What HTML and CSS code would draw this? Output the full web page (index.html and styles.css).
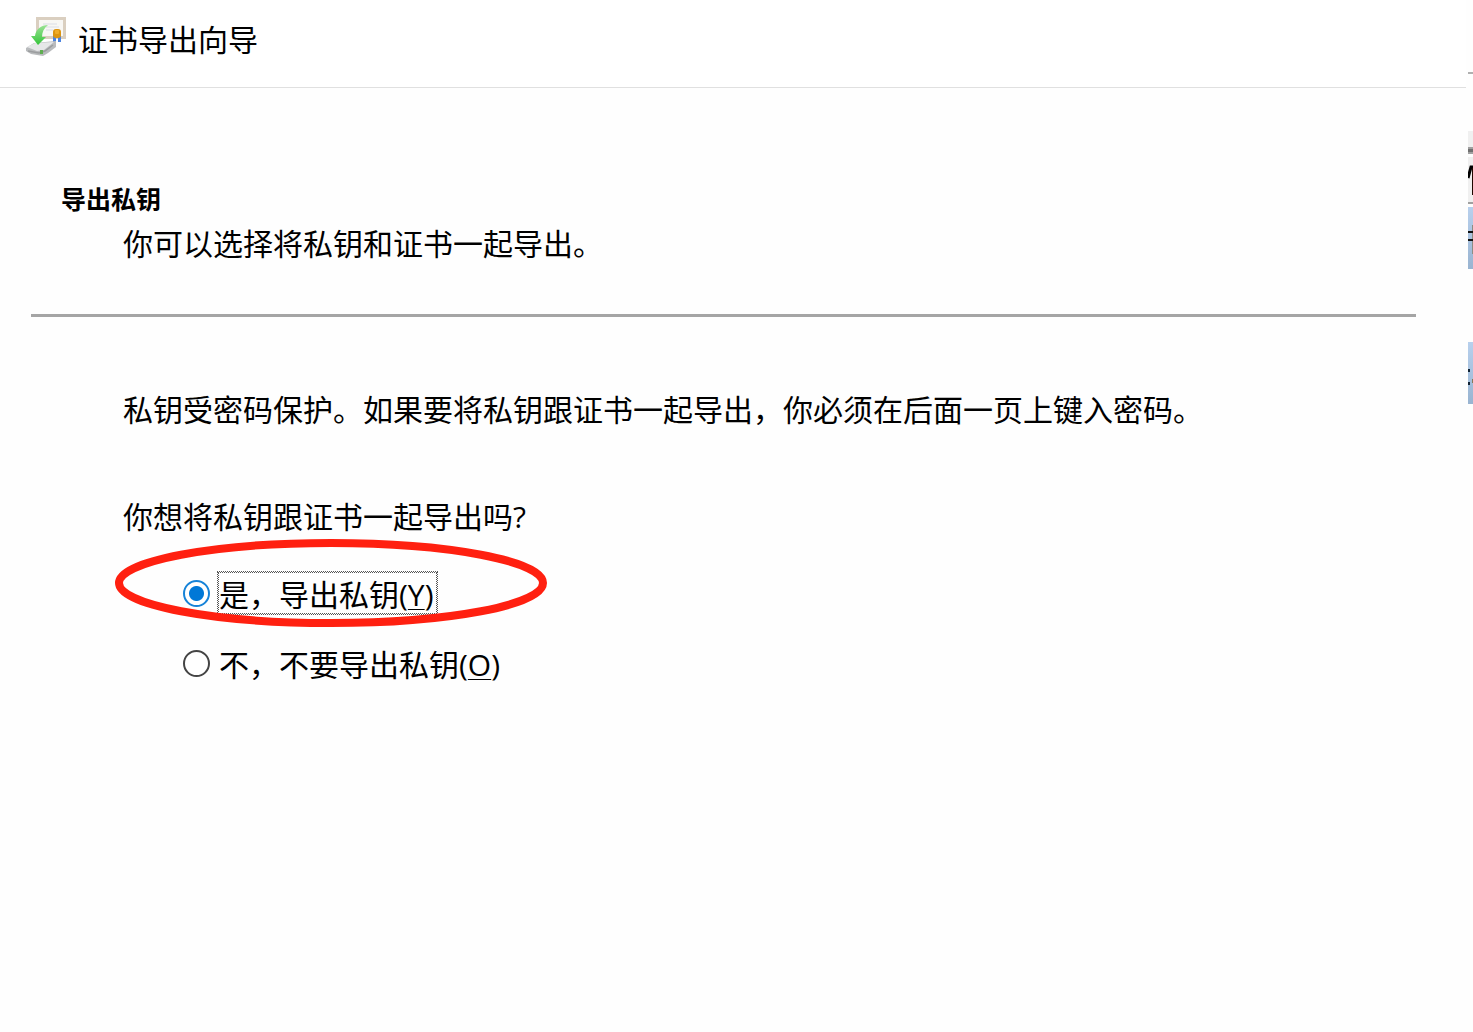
FILE: index.html
```html
<!DOCTYPE html>
<html lang="zh-CN">

<head>
    <meta charset="UTF-8">
    <meta name="viewport" content="width=device-width, initial-scale=1.0">
    <title>证书导出向导</title>
    <link rel="stylesheet" href="styles.css">
</head>

<body>
    <main class="wizard">
        <header class="wizard-header">
            <svg class="wizard-icon" width="40" height="40" viewBox="0 0 40 40" aria-hidden="true">
                <defs>
                    <linearGradient id="arrow" x1="0" y1="0" x2="0" y2="1">
                        <stop offset="0" stop-color="#9be295" />
                        <stop offset="1" stop-color="#35c53a" />
                    </linearGradient>
                </defs>
                <!-- certificate -->
                <rect x="10" y="0" width="30" height="22" fill="#dacfc0" />
                <rect x="13" y="3" width="24" height="16" fill="#f8f7f4" />
                <path d="M17 7h14M20 10h13M20 13h7" stroke="#e3e6ea" stroke-width="1.5" />
                <path d="M27 18h3v7h-3zM32 18h3v7h-3z" fill="#4a83e0" />
                <rect x="27" y="12" width="8" height="9" rx="3" fill="#dd9510" />
                <rect x="29" y="13" width="4" height="4" rx="1" fill="#efac28" />
                <!-- drive -->
                <path d="M0 31l8-5 22-2v6l-8 6-5 3-12-2-5-3z" fill="#b9bbbd" />
                <path d="M1 30l8-4 19-1-10 8-7 1z" fill="#e6e7e8" />
                <path d="M2 34l11 2 6-2 8-6" fill="none" stroke="#9b9d9f" stroke-width="1.5" />
                <rect x="14" y="33" width="3" height="4" fill="#5fae51" />
                <!-- arrow -->
                <path d="M22 8c-7 0-12 4-13 11H5l7 9 8-8h-4c0-5 2-9 6-12z" fill="url(#arrow)" />
            </svg>
            <h1 class="wizard-title">证书导出向导</h1>
        </header>

        <section class="intro">
            <h2 class="intro-title">导出私钥</h2>
            <p class="intro-text">你可以选择将私钥和证书一起导出。</p>
        </section>

        <hr class="divider">

        <form class="content">
            <p class="note">私钥受密码保护。如果要将私钥跟证书一起导出，你必须在后面一页上键入密码。</p>
            <fieldset class="options">
                <legend class="question">你想将私钥跟证书一起导出吗?</legend>
                <div class="option">
                    <input type="radio" id="exportYes" name="exportKey" value="yes" checked>
                    <label class="focused" for="exportYes">是，导出私钥(<u>Y</u>)</label>
                </div>
                <div class="option">
                    <input type="radio" id="exportNo" name="exportKey" value="no">
                    <label for="exportNo">不，不要导出私钥(<u>O</u>)</label>
                </div>
                <svg class="highlight" width="434" height="90" viewBox="0 0 434 90" aria-hidden="true">
                    <ellipse cx="217" cy="45" rx="212" ry="40" fill="none" stroke="#ff2010" stroke-width="8" />
                </svg>
            </fieldset>
        </form>
    </main>

    <!-- edge of the window behind the wizard -->
    <aside class="behind" aria-hidden="true">
        <svg width="5" height="420" viewBox="0 0 5 420">
            <defs>
                <linearGradient id="selected" x1="0" y1="0" x2="0" y2="1">
                    <stop offset="0" stop-color="#b8d0ed" />
                    <stop offset="1" stop-color="#99b4d1" />
                </linearGradient>
            </defs>
            <rect y="72" width="5" height="2" fill="#b0b0b0" />
            <rect y="131" width="5" height="17" fill="#f0f0f0" />
            <rect y="147" width="5" height="7" fill="#a0a0a0" />
            <rect y="149" width="5" height="3" fill="#707070" />
            <rect y="157" width="5" height="45" fill="#f0f0f0" />
            <path d="M0 178L3 167H5" fill="none" stroke="#000" stroke-width="3" />
            <rect x="4" y="168" width="1" height="27" fill="#200800" />
            <rect y="202" width="5" height="2" fill="#a0a0a0" />
            <rect y="207" width="5" height="62" fill="url(#selected)" />
            <rect x="4" y="225" width="1" height="29" fill="#8c8d84" />
            <rect y="231" width="5" height="2" fill="#111" />
            <rect y="239" width="5" height="2" fill="#111" />
            <rect y="342" width="5" height="62" fill="url(#selected)" />
            <rect y="369" width="2" height="3" fill="#123" />
            <rect y="382" width="2" height="3" fill="#123" />
            <rect x="4" y="379" width="1" height="4" fill="#86795a" />
        </svg>
    </aside>
</body>

</html>
```

FILE: styles.css
```css
body {
    font-family: "Open Sans", "Noto Sans CJK SC", sans-serif;
    font-size: 30px;
    line-height: 40px;
    background-color: #fefefe;
    color: #000;
    margin: 0;
    display: flex;
    min-height: 100vh;
}

h1,
h2,
p {
    margin: 0;
    font-weight: normal;
}

.wizard {
    flex: 1;
    min-width: 0;
    margin-right: 2px;
}

.wizard-header {
    display: flex;
    align-items: flex-start;
    gap: 12px;
    height: 70px;
    padding: 17px 26px 0;
    background-color: #fff;
    border-bottom: 1px solid #e0e0e0;
}

.wizard-icon {
    flex: none;
}

.wizard-title {
    font-size: 30px;
    line-height: 45px;
}

.intro {
    padding: 91px 61px 50px;
}

.intro-title {
    font-size: 25px;
    font-weight: bold;
}

.intro-text {
    margin-top: 5px;
    padding-left: 62px;
}

.divider {
    height: 3px;
    margin: 0 50px 0 31px;
    border: none;
    background-color: #a5a5a5;
}

.content {
    padding: 73px 50px 0 123px;
}

.options {
    position: relative;
    margin: 67px 0 0;
    padding: 0;
    border: none;
}

.question {
    padding: 0;
    margin-bottom: 35px;
}

.option {
    display: flex;
    align-items: center;
    gap: 8px;
    margin-bottom: 28px;
    padding-left: 60px;
}

.option input {
    appearance: none;
    box-sizing: border-box;
    width: 27px;
    height: 27px;
    margin: 0;
    border: 2px solid #444;
    border-radius: 50%;
    background-color: #fff;
}

.option input:checked {
    border-color: #1683d8;
    background: radial-gradient(circle, #0078d7 7px, #fff 8px);
}

.option label {
    line-height: 36px;
    border: 1px solid transparent;
    padding: 4px 2px 0 0;
}

.option u {
    text-decoration-thickness: 1px;
    text-underline-offset: 3px;
}

.option .focused {
    outline: 1px dotted #555;
    border: 1px dotted #555;
}

/* red ring around the selected option */
.highlight {
    position: absolute;
    top: -34px;
    left: -9px;
    pointer-events: none;
}

.behind {
    flex: none;
    width: 5px;
    overflow: hidden;
}

.behind svg {
    display: block;
}
```
